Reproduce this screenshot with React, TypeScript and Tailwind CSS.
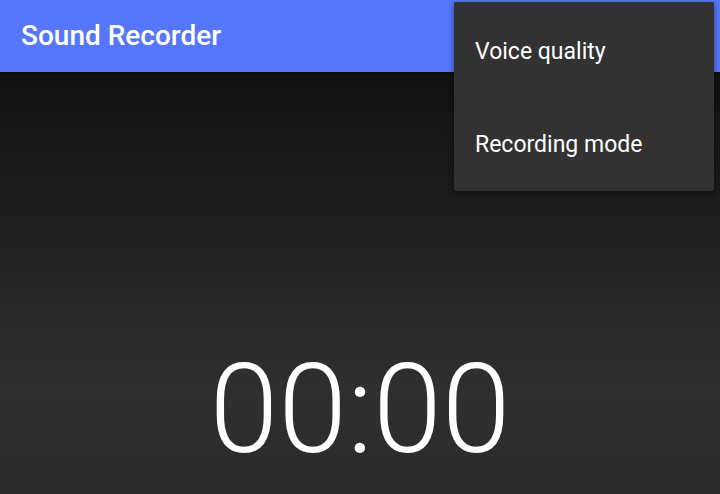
export default function App() {
  return (
    <div
      className="relative w-[720px] h-[494px] overflow-hidden flex flex-col"
      style={{ fontFamily: 'Roboto, "Noto Sans", sans-serif' }}
    >
      {/* toolbar */}
      <div className="relative z-10 h-[72px] shrink-0 bg-[#5677fc] flex items-center pl-[21px] shadow-[0_1px_2px_rgba(0,0,0,0.5)]">
        <h1 className="text-white text-[28px] font-medium leading-none">Sound Recorder</h1>
      </div>

      {/* timer */}
      <div className="flex-1 flex justify-center pt-[276px] bg-[linear-gradient(to_bottom,#111111_0%,#1c1c1c_30%,#2f2f2f_75%,#2b2b2b_100%)]">
        <span className="text-white text-[124px] font-light leading-none">00:00</span>
      </div>

      {/* overflow menu */}
      <div className="absolute z-20 top-[2px] left-[454px] w-[260px] h-[189px] pt-[2px] bg-[#323232] rounded-[2px] shadow-[0_2px_6px_rgba(0,0,0,0.5)] flex flex-col">
        <div className="h-[96px] flex items-center pl-[21px] text-white text-[23px]">Voice quality</div>
        <div className="h-[91px] flex items-center pl-[21px] text-white text-[23px]">Recording mode</div>
      </div>
    </div>
  )
}
